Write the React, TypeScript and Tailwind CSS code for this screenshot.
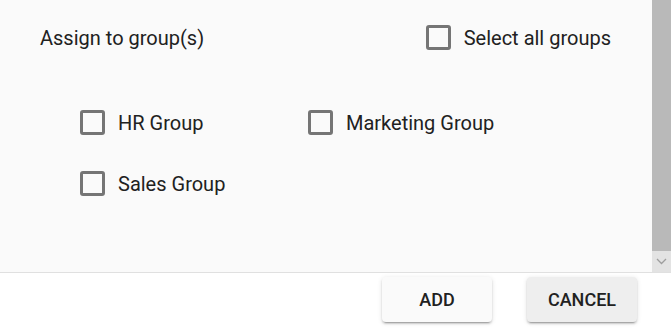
import React from 'react';

const groups = ['HR Group', 'Marketing Group', 'Sales Group'];

const Box: React.FC<{ label: string }> = ({ label }) => (
    <label className="flex items-center gap-[13px] cursor-pointer">
        <span className="w-[25px] h-[25px] rounded-[3px] border-[3px] border-[#757575] bg-transparent shrink-0" />
        <span className="text-[20px] leading-[26px] text-[#212121] pt-[1px]">{label}</span>
    </label>
);

export default function App() {
    return (
        <div className="w-[671px] h-[335px] flex flex-col bg-white font-['Roboto',sans-serif]">
            <div className="h-[272px] flex bg-[#fafafa]">
                <div className="flex-1 pt-[23px]">
                    {/* header row */}
                    <div className="flex items-center justify-between pl-[40px] pr-[41px]">
                        <span className="text-[20px] leading-[26px] text-[#212121] pt-[2px]">Assign to group(s)</span>
                        <Box label="Select all groups" />
                    </div>
                    <div className="grid grid-cols-[228px_228px] gap-y-[34px] pl-[80px] mt-[58px]">
                        {groups.map(g => (
                            <Box key={g} label={g} />
                        ))}
                    </div>
                </div>
                {/* scrollbar */}
                <div className="w-[19px] flex flex-col">
                    <div className="flex-1 bg-[#b9b9b9]" />
                    <div className="h-[21px] bg-[#e3e3e3] flex items-center justify-center">
                        <svg width="11" height="7" viewBox="0 0 11 7">
                            <path d="M1 1l4.5 4.5L10 1" fill="none" stroke="#9e9e9e" strokeWidth="1.3" />
                        </svg>
                    </div>
                </div>
            </div>
            <div className="flex-1 border-t border-[#e0e0e0] flex justify-end items-start gap-[35px] pt-[4px] pr-[34px]">
                <button className="w-[110px] h-[45px] rounded-[4px] bg-[#fafafa] text-[18px] font-medium uppercase text-[#212121] shadow-[0_3px_1px_-2px_rgba(0,0,0,0.2),0_2px_2px_0_rgba(0,0,0,0.14),0_1px_5px_0_rgba(0,0,0,0.12)]">
                    Add
                </button>
                <button className="w-[110px] h-[45px] rounded-[4px] bg-[#eeeeee] text-[18px] font-medium uppercase text-[#212121] shadow-[0_3px_1px_-2px_rgba(0,0,0,0.2),0_2px_2px_0_rgba(0,0,0,0.14),0_1px_5px_0_rgba(0,0,0,0.12)]">
                    Cancel
                </button>
            </div>
        </div>
    );
}
